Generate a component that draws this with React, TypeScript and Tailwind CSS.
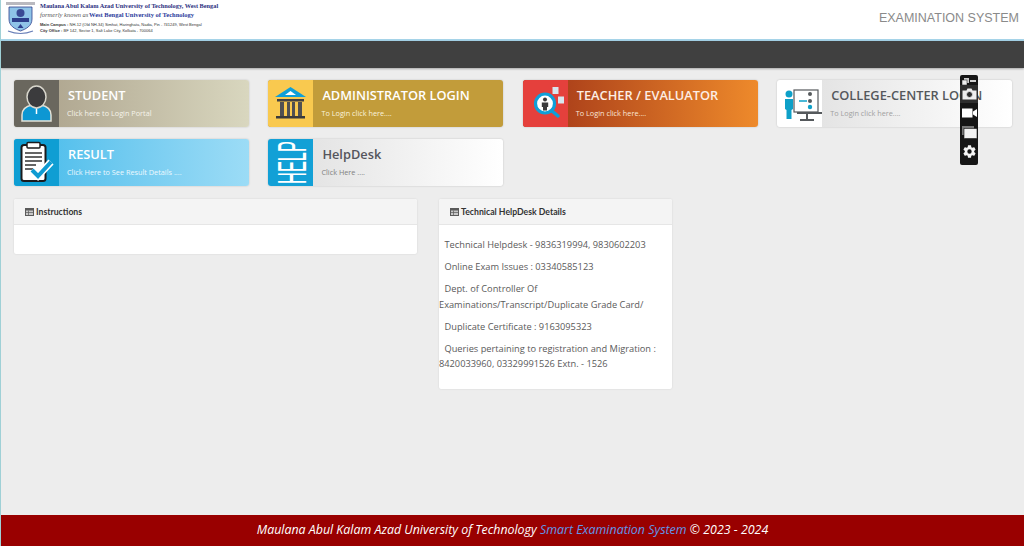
import type { ReactNode } from "react";

interface TileProps {
  title: string;
  sub: string;
  icon: ReactNode;
  iconBg: string;
  body: string;
  titleColor: string;
  subColor: string;
}

function StudentIcon() {
  return (
    <svg width="45" height="47" viewBox="0 0 45 47">
      <path d="M8 41 v-6 c0-6 5-9 10-10 h9 c5 1 10 4 10 10 v6 z" fill="#0d97d3" stroke="#e4e2d8" strokeWidth="1.5" />
      <path d="M22.5 27 v7" stroke="#fff" strokeWidth="1.5" />
      <ellipse cx="22.5" cy="17" rx="9.5" ry="11" fill="#3b3b3d" stroke="#d8d6cc" strokeWidth="1.5" />
    </svg>
  );
}

function BankIcon() {
  return (
    <svg width="45" height="47" viewBox="0 0 45 47">
      <path d="M22.5 7 L38 17 H7 Z" fill="#0f9fd8" />
      <path d="M17 15 h11 l-5.500-4 z" fill="#fff" />
      <rect x="9" y="19" width="27" height="2.500" fill="#404042" />
      <path d="M12 22 h4 v14 h-4 z M19 22 h3 v14 h-3 z M24 22 h3 v14 h-3 z M30 22 h4 v14 h-4 z" fill="#505052" />
      <rect x="8" y="36" width="29" height="2.500" fill="#3a3a3c" />
    </svg>
  );
}

function TeacherIcon() {
  return (
    <svg width="45" height="47" viewBox="0 0 45 47">
      <rect x="29.500" y="7" width="6" height="7" fill="#d8e6ee" />
      <rect x="35" y="16.500" width="6" height="7" fill="#d8e6ee" />
      <path d="M29 31 L35 36" stroke="#0f9fd8" strokeWidth="3.500" strokeLinecap="round" />
      <circle cx="22" cy="23.500" r="9.500" fill="#fff" stroke="#0f9fd8" strokeWidth="3.200" />
      <circle cx="22" cy="19.500" r="2" fill="#3a3a3c" />
      <path d="M18.800 22.500 h6.400 v4.500 h-1.200 v3.500 h-4 v-3.500 h-1.200 z" fill="#3a3a3c" />
    </svg>
  );
}

function CollegeIcon() {
  return (
    <svg width="45" height="47" viewBox="0 0 45 47">
      <circle cx="12" cy="14" r="3.500" fill="#0ea0c8" />
      <path d="M8 19 h8 v10 l-1.500 1 v9 h-5 v-9 l-1.500-1 z" fill="#0ea0c8" />
      <rect x="17" y="10" width="24" height="22" fill="#fff" stroke="#55595c" strokeWidth="1.200" />
      <circle cx="33" cy="14" r="2" fill="#55595c" />
      <circle cx="33" cy="21" r="2" fill="#55595c" />
      <circle cx="33" cy="27" r="2.200" fill="#0ea0c8" />
      <path d="M22 21 h8" stroke="#0ea0c8" strokeWidth="1.500" />
      <rect x="20" y="32" width="25" height="2" fill="#55595c" />
      <path d="M30 34 v5 M23 40 h14" stroke="#55595c" strokeWidth="2" />
    </svg>
  );
}

function ResultIcon() {
  return (
    <svg width="45" height="47" viewBox="0 0 45 47">
      <rect x="7.500" y="6" width="24" height="36" rx="2.500" fill="#fff" stroke="#1b1b1d" strokeWidth="2" />
      <rect x="13" y="3.500" width="13" height="5.500" rx="1" fill="#fff" stroke="#1b1b1d" strokeWidth="1.500" />
      <path d="M11 14 h17 M11 18 h17 M11 22 h17 M11 26 h11 M11 30 h8" stroke="#333" strokeWidth="1.500" />
      <path d="M18 31 l6 6 l13-14" fill="none" stroke="#fff" strokeWidth="7" />
      <path d="M18 31 l6 6 l13-14" fill="none" stroke="#0f9bd2" strokeWidth="4" />
    </svg>
  );
}

function HelpIcon() {
  return (
    <svg width="45" height="47" viewBox="0 0 45 47">
      <text
        transform="translate(37.500 45) rotate(-90)"
        textLength="43"
        lengthAdjust="spacingAndGlyphs"
        fill="#fff"
        fontSize="41"
        fontFamily="Liberation Sans, sans-serif"
      >
        HELP
      </text>
    </svg>
  );
}

function Tile({ title, sub, icon, iconBg, body, titleColor, subColor }: TileProps) {
  return (
    <div className={`flex h-[47px] overflow-hidden rounded-[3px] shadow-[0_0_2px_rgba(0,0,0,0.2)] ${body}`}>
      <div className={`flex w-[45px] shrink-0 items-center justify-center ${iconBg}`}>{icon}</div>
      <div className="min-w-0 flex-1 whitespace-nowrap">
        <div className={`ml-[9px] mt-[5px] text-[12.800px] leading-[20px] font-semibold ${titleColor}`}>
          {title}
        </div>
        <div className={`ml-[8px] mt-[2px] text-[7.300px] leading-[12px] ${subColor}`}>{sub}</div>
      </div>
    </div>
  );
}

function PanelIcon() {
  return (
    <svg width="9" height="8" viewBox="0 0 9 8" className="mr-[2px] inline-block align-[-0.5px]">
      <rect width="9" height="8" fill="#5a5a5a" />
      <rect x="1" y="2.500" width="7" height="4.500" fill="#c8c8c8" />
      <path d="M3.500 2.500 v4.500 M1 4.500 h7" stroke="#5a5a5a" strokeWidth="0.700" />
    </svg>
  );
}

function PanelHead({ title }: { title: string }) {
  return (
    <div className="flex h-[26px] items-center border-b border-[#e6e6e6] bg-[#f4f4f4] pl-[11px] font-['Lato',sans-serif] text-[8.700px] font-bold text-[#333]">
      <PanelIcon />
      {title}
    </div>
  );
}

function CaptureBar() {
  return (
    <div className="absolute left-[960px] top-[75px] flex h-[90px] w-[18px] flex-col items-center rounded-[2px] bg-[#161616] pt-[2px]">
      <div className="flex h-[8px] items-center gap-[1px]">
        <svg width="7" height="7" viewBox="0 0 7 7">
          <rect x="2" y="0" width="5" height="5" fill="#ccc" />
          <rect x="0" y="2" width="5" height="5" fill="#eee" stroke="#161616" strokeWidth="0.500" />
        </svg>
        <span className="h-[2px] w-[6px] bg-[radial-gradient(circle,#ddd_0.7px,transparent_0.8px)] bg-[length:2px_2px]" />
      </div>
      <div className="flex h-[18px] w-full items-center justify-center bg-[#2e2e2e]">
        <svg width="15" height="12" viewBox="0 0 15 12">
          <path d="M0.500 2.500 h4 l1-2 h4 l1 2 h4 v9 h-14 z" fill="#eee" />
          <circle cx="7.500" cy="6.500" r="3" fill="#2e2e2e" stroke="#eee" strokeWidth="0.800" />
        </svg>
      </div>
      <svg className="mt-[5px]" width="15" height="10" viewBox="0 0 15 10">
        <rect y="0.500" width="10.500" height="9" fill="#fff" />
        <path d="M11 3.500 L15 1 V9 L11 6.500 Z" fill="#fff" />
      </svg>
      <svg className="mt-[7.500px]" width="15" height="13" viewBox="0 0 15 13">
        <rect x="0" y="0" width="12" height="9" fill="#777" />
        <rect x="2" y="2.500" width="13" height="10" fill="#f2f2f2" stroke="#161616" strokeWidth="0.600" />
      </svg>
      <svg className="mt-[5px]" width="15" height="15" viewBox="0 0 24 24">
        <path
          fill="#f5f5f5"
          d="M19.430 12.980c.04-.32.070-.64.070-.98s-.03-.66-.07-.98l2.110-1.650c.19-.15.240-.42.120-.64l-2-3.460c-.12-.22-.39-.30-.61-.22l-2.490 1c-.52-.40-1.080-.73-1.690-.98l-.38-2.650A.488.488 0 0 0 14 2h-4c-.25 0-.46.18-.49.420l-.38 2.650c-.61.250-1.170.590-1.690.980l-2.490-1c-.23-.090-.49 0-.61.220l-2 3.460c-.13.220-.07.490.120.640l2.110 1.650c-.04.320-.07.650-.07.980s.03.660.07.980l-2.110 1.650c-.19.150-.24.420-.12.640l2 3.460c.12.220.39.300.61.220l2.490-1c.52.400 1.080.730 1.690.980l.38 2.650c.03.240.24.420.49.420h4c.25 0 .46-.18.490-.42l.38-2.650c.61-.250 1.170-.590 1.690-.980l2.490 1c.23.090.49 0 .61-.22l2-3.460c.12-.22.070-.49-.12-.64l-2.110-1.650zM12 15.500a3.500 3.500 0 1 1 0-7 3.500 3.500 0 0 1 0 7z"
        />
      </svg>
    </div>
  );
}

function Emblem() {
  return (
    <svg width="29" height="33" viewBox="0 0 29 33" className="shrink-0">
      <rect x="0" y="0" width="29" height="3" fill="#8a8a94" opacity="0.6" />
      <path d="M3 5 H26 V17 C26 24 20 27 14.500 29 C9 27 3 24 3 17 Z" fill="#8fc4e8" stroke="#2d3f8c" strokeWidth="0.800" />
      <circle cx="14.500" cy="11" r="4" fill="#3a4a94" />
      <rect x="6" y="16" width="17" height="4" fill="#2d3f8c" />
      <path d="M14.500 22 l3 4 h-6 z" fill="#2d3f8c" />
      <path d="M2 29 Q14.500 34 27 29" fill="none" stroke="#6a80b8" strokeWidth="1.200" />
    </svg>
  );
}

export default function App() {
  return (
    <div className="flex h-[546px] w-[1024px] flex-col overflow-hidden border-l border-[#9fd0d6] bg-[#ededed] font-['Open_Sans',sans-serif]">
      <header className="flex h-[39px] shrink-0 items-start justify-between bg-white pl-[5px] pr-[5px]">
        <div className="mt-[2px] flex">
          <Emblem />
          <div className="ml-[5px] whitespace-nowrap">
            <div className="font-['Liberation_Serif',serif] text-[6.300px] leading-[8px] font-bold text-[#2b2f80]">
              Maulana Abul Kalam Azad University of Technology, West Bengal
            </div>
            <div className="mt-[1px] flex font-['Liberation_Serif',serif] text-[6.500px] leading-[8px]">
              <span className="w-[49px] italic text-[#555]">formerly known as</span>
              <span className="font-bold text-[#2b3a9c]">West Bengal University of Technology</span>
            </div>
            <div className="mt-[3px] font-['Liberation_Sans',sans-serif] text-[4px] leading-[6px] text-[#333]">
              <b>Main Campus :</b> NH-12 (Old NH-34) Simhat, Haringhata, Nadia, Pin - 741249, West Bengal
            </div>
            <div className="font-['Liberation_Sans',sans-serif] text-[4px] leading-[6px] text-[#333]">
              <b>City Office :</b> BF 142, Sector 1, Salt Lake City, Kolkata - 700064
            </div>
          </div>
        </div>
        <div className="mt-[10px] font-['Liberation_Sans',sans-serif] text-[12.500px] leading-[16px] text-[#8a8a8a]">EXAMINATION SYSTEM</div>
      </header>
      <div className="h-[2px] shrink-0 bg-[#a5d3e8]" />
      <div className="h-[27px] shrink-0 bg-[#404040] shadow-[0_1px_2px_rgba(0,0,0,0.3)]" />

      <main className="flex-1 pl-[13px] pr-[12px] pt-[12px]">
        <div className="grid grid-cols-4 gap-x-[19.500px] gap-y-[12px]">
          <Tile
            title="STUDENT"
            sub="Click here to Login Portal"
            icon={<StudentIcon />}
            iconBg="bg-[#6a675e]"
            body="bg-gradient-to-r from-[#a89e88] to-[#d9d7bf]"
            titleColor="text-white"
            subColor="text-[#f6f4ea]"
          />
          <Tile
            title="ADMINISTRATOR LOGIN"
            sub="To Login click here...."
            icon={<BankIcon />}
            iconBg="bg-[#f9c94f]"
            body="bg-[#c29c3a]"
            titleColor="text-white"
            subColor="text-[#fbf3dc]"
          />
          <Tile
            title="TEACHER / EVALUATOR"
            sub="To Login click here...."
            icon={<TeacherIcon />}
            iconBg="bg-[#e5403c]"
            body="bg-gradient-to-r from-[#a03217] to-[#ee8a2b]"
            titleColor="text-[#fdeee4]"
            subColor="text-[#fbe6d8]"
          />
          <Tile
            title="COLLEGE-CENTER LOGIN"
            sub="To Login click here...."
            icon={<CollegeIcon />}
            iconBg="bg-white"
            body="bg-gradient-to-r from-[#dedede] to-white"
            titleColor="text-[#55585c]"
            subColor="text-[#a0a0a0]"
          />
          <Tile
            title="RESULT"
            sub="Click Here to See Result Details ...."
            icon={<ResultIcon />}
            iconBg="bg-[#0f9ed3]"
            body="bg-gradient-to-r from-[#3fbaea] to-[#9cdcf6]"
            titleColor="text-white"
            subColor="text-[#eef9fe]"
          />
          <Tile
            title="HelpDesk"
            sub="Click Here ...."
            icon={<HelpIcon />}
            iconBg="bg-[#12a0d6]"
            body="bg-gradient-to-r from-[#dedede] to-white"
            titleColor="text-[#55555c]"
            subColor="text-[#808080]"
          />
        </div>

        <div className="mt-[13px] flex items-start gap-[22px]">
          <section className="w-[403px] overflow-hidden rounded-[2px] bg-white shadow-[0_0_2px_rgba(0,0,0,0.12)]">
            <PanelHead title="Instructions" />
            <div className="h-[29px]" />
          </section>
          <section className="h-[190px] w-[233px] overflow-hidden rounded-[2px] bg-white shadow-[0_0_2px_rgba(0,0,0,0.12)]">
            <PanelHead title="Technical HelpDesk Details" />
            <div className="whitespace-nowrap pt-[12px] text-[9.250px] leading-[15.500px] text-[#5a5a5a]">
              <p className="indent-[5.500px]">Technical Helpdesk - 9836319994, 9830602203</p>
              <p className="mt-[6.500px] indent-[5.500px]">Online Exam Issues : 03340585123</p>
              <p className="mt-[6.500px] indent-[5.500px]">
                Dept. of Controller Of
                <br />
                Examinations/Transcript/Duplicate Grade Card/
              </p>
              <p className="mt-[6.500px] indent-[5.500px]">Duplicate Certificate : 9163095323</p>
              <p className="mt-[6.500px] indent-[5.500px]">
                Queries pertaining to registration and Migration :
                <br />
                8420033960, 03329991526 Extn. - 1526
              </p>
            </div>
          </section>
        </div>
      </main>

      <footer className="flex h-[31px] shrink-0 items-center justify-center bg-[#990000] text-[12.400px] italic text-white">
        Maulana Abul Kalam Azad University of Technology&nbsp;
        <span className="text-[#5f97ea]">Smart Examination System</span>&nbsp;© 2023 - 2024
      </footer>
      <CaptureBar />
    </div>
  );
}
